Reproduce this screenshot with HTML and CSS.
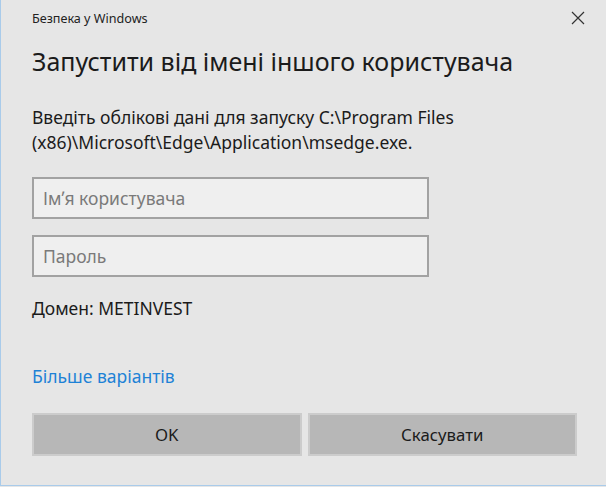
FILE: index.html
```html
<!DOCTYPE html>
<html lang="uk">
<head>
<meta charset="utf-8">
<link rel="stylesheet" href="styles.css">
</head>
<body>
<div class="dialog">
  <div class="titlebar">
    <span class="caption">Безпека у Windows</span>
    <span class="close"><svg width="14" height="14" viewBox="0 0 14 14"><path d="M1 1 L13 13 M13 1 L1 13" stroke="#333" stroke-width="1.2" fill="none"/></svg></span>
  </div>
  <h1 class="heading">Запустити від імені іншого користувача</h1>
  <p class="desc">Введіть облікові дані для запуску C:\Program Files (x86)\Microsoft\Edge\Application\msedge.exe.</p>
  <div class="field">Імʼя користувача</div>
  <div class="field">Пароль</div>
  <div class="domain">Домен: METINVEST</div>
  <div class="more">Більше варіантів</div>
  <div class="buttons">
    <div class="btn">OK</div>
    <div class="btn">Скасувати</div>
  </div>
</div>
</body>
</html>
```
FILE: styles.css
```css
html, body {
  margin: 0;
  padding: 0;
  background: #e6e6e6;
}
.dialog {
  box-sizing: border-box;
  width: 606px;
  height: 486px;
  background: #e6e6e6;
  border-left: 1px solid #a9cbea;
  border-bottom: 1px solid #a9cbea;
  padding: 0 29px 0 31px;
  font-family: "Segoe UI", "Noto Sans", sans-serif;
  color: #1b1b1b;
  display: flex;
  flex-direction: column;
}
.titlebar {
  display: flex;
  justify-content: space-between;
  align-items: center;
  height: 36px;
}
.caption {
  font-size: 12.6px;
  color: #222;
}
.close {
  display: flex;
  margin-right: -8px;
}
.heading {
  margin: 3px 0 0;
  font-weight: 400;
  font-size: 25px;
  line-height: 44px;
  white-space: nowrap;
}
.desc {
  margin: 22px 0 0;
  font-size: 17.5px;
  line-height: 25px;
  width: 470px;
}
.field {
  box-sizing: border-box;
  width: 397px;
  height: 42px;
  margin-top: 22px;
  border: 2px solid #a2a2a2;
  background: #efefef;
  font-size: 17.5px;
  color: #7a7a7a;
  padding: 0 0 0 9px;
  display: flex;
  align-items: center;
}
.field + .field {
  margin-top: 16px;
}
.domain {
  font-size: 17.5px;
  margin-top: 20px;
  line-height: 22px;
}
.more {
  font-size: 17.5px;
  color: #1e82d6;
  margin-top: 46px;
  line-height: 22px;
}
.buttons {
  margin-top: 26px;
  display: flex;
  gap: 6px;
}
.btn {
  box-sizing: border-box;
  width: 270px;
  height: 43px;
  background: #b7b7b7;
  border: 2px solid #cccccc;
  display: flex;
  align-items: center;
  justify-content: center;
  font-size: 16.8px;
  color: #1b1b1b;
}
```
